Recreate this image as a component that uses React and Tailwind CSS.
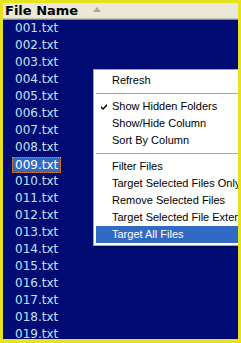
import React from "react";

const files = Array.from({ length: 19 }, (_, i) => String(i + 1).padStart(3, "0") + ".txt");

const menu = [
  { label: "Refresh" },
  { sep: true },
  { label: "Show Hidden Folders", checked: true },
  { label: "Show/Hide Column" },
  { label: "Sort By Column" },
  { sep: true },
  { label: "Filter Files" },
  { label: "Target Selected Files Only" },
  { label: "Remove Selected Files" },
  { label: "Target Selected File Extensions" },
  { label: "Target All Files", active: true },
];

export default function App() {
  return (
    <div className="w-[241px] h-[343px] bg-[#e6e31e] pt-[3px] pl-[3px] pr-[3px] pb-[4px]">
      <div className="relative w-full h-full overflow-hidden bg-[#000c74]">
        {/* column header */}
        <div className="h-[15px] bg-[#ebe8d7] flex items-center pl-[2px] relative">
          <span className="font-['DejaVu_Sans',sans-serif] font-bold text-[13px] leading-[15px] text-black">
            File Name
          </span>
          <svg className="absolute left-[90px] top-[4px]" width="8" height="5" viewBox="0 0 8 5">
            <polygon points="0,5 4,0 8,5" fill="#aca899" />
          </svg>
        </div>
        <div className="h-px bg-[#c7c3b1]" />
        <div className="h-px bg-[#8a8676]" />

        {/* file list */}
        <div className="flex flex-col">
          {files.map((f) => (
            <div key={f} className="h-[17px] pl-[9px] flex items-center">
              {f === "009.txt" ? (
                <span className="h-[16px] px-[2px] border border-dotted border-[#e28a2a] bg-[#316ac5] text-white font-['DejaVu_Sans',sans-serif] text-[12px] leading-[14px]">
                  {f}
                </span>
              ) : (
                <span className="px-[3px] text-[#c3e1f3] font-['DejaVu_Sans',sans-serif] text-[12px] leading-[17px]">
                  {f}
                </span>
              )}
            </div>
          ))}
        </div>

        {/* context menu */}
        <div className="absolute left-[90px] top-[66px] w-[170px] bg-white border border-[#aca899] shadow-[2px_2px_0_rgba(0,0,0,0.25)] py-[2px] px-[2px]">
          {menu.map((m, i) =>
            m.sep ? (
              <div key={i} className="h-[9px] flex items-center">
                <div className="w-full h-px bg-[#aca899]" />
              </div>
            ) : (
              <div
                key={i}
                className={`h-[17px] flex items-center whitespace-nowrap font-['Liberation_Sans',sans-serif] text-[11px] ${
                  m.active ? "bg-[#316ac5] text-white" : "text-black"
                }`}
              >
                <span className="w-[16px] shrink-0 flex justify-center">
                  {m.checked && (
                    <svg width="7" height="7" viewBox="0 0 7 7">
                      <path d="M0 3 L2 5 L6 1 L6 3 L2 7 L0 5 Z" fill="#000" />
                    </svg>
                  )}
                </span>
                {m.label}
              </div>
            )
          )}
        </div>
      </div>
    </div>
  );
}
